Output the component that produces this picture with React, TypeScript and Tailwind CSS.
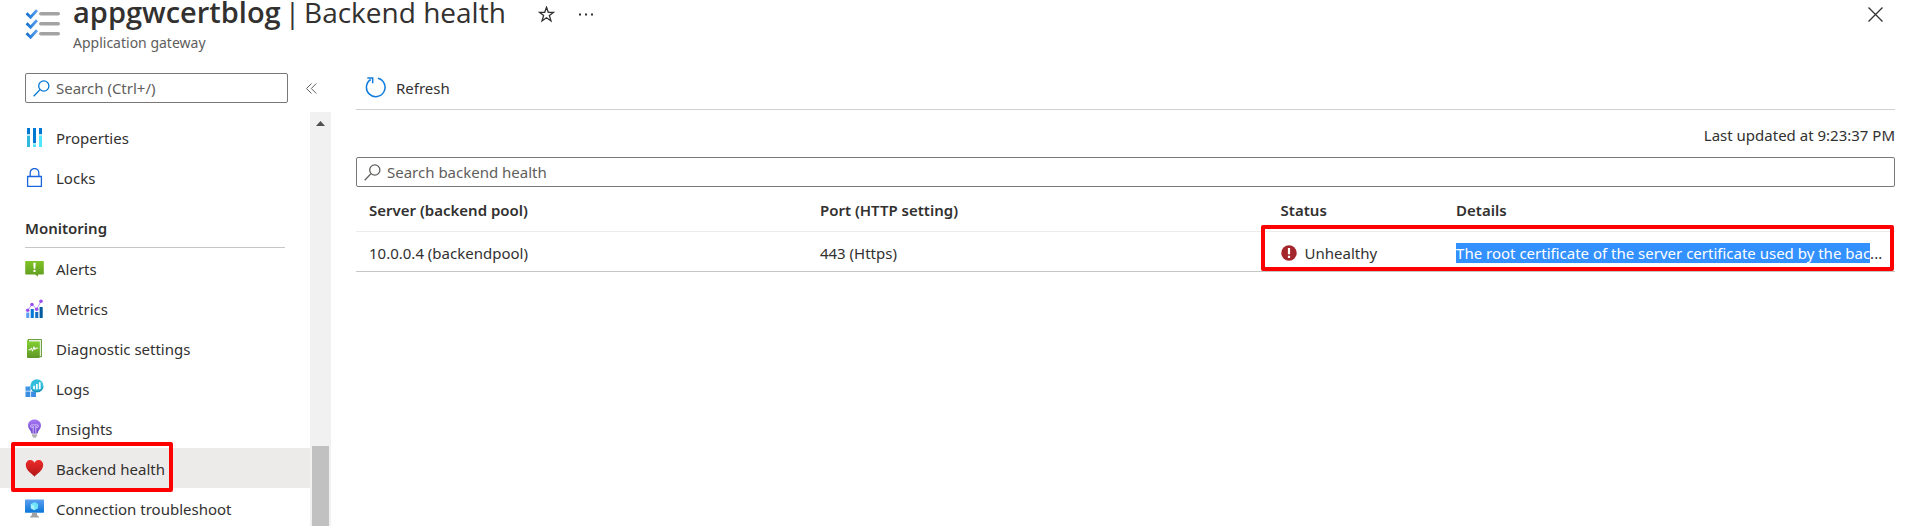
import type { ReactNode } from 'react'

/* ---------- icons ---------- */

function ChecklistIcon() {
  return (
    <svg width="36" height="32" viewBox="0 0 36 32" fill="none" className="shrink-0">
      <defs>
        <linearGradient id="tick" x1="0" y1="0" x2="1" y2="0">
          <stop offset="0" stopColor="#0f6fd0" />
          <stop offset="1" stopColor="#5ea0ef" />
        </linearGradient>
      </defs>
      {[1, 11, 21].map((y) => (
        <g key={y}>
          <path d={`M1.6 ${y + 4.2}l4 4L12 ${y + 1.2}`} stroke="url(#tick)" strokeWidth="2.8" />
          <rect x="14" y={y + 3} width="21" height="3.6" rx="1.8" fill="#a3a3a3" />
        </g>
      ))}
    </svg>
  )
}

function SearchIcon({ className }: { className: string }) {
  return (
    <svg width="17" height="17" viewBox="0 0 17 17" fill="none" stroke="currentColor" strokeWidth="1.3" className={className}>
      <circle cx="10.8" cy="6" r="5.1" />
      <path d="M7 9.6L.7 16.2" />
    </svg>
  )
}

function PropertiesIcon() {
  return (
    <svg width="19" height="19" viewBox="0 0 19 19">
      <path d="M2 0h3v6H2zM8 0h3v15H8zM14 0h3v6h-3z" fill="#0078d4" />
      <path d="M2 6h3v2H2zM8 15h3v1.500H8zM14 6h3v2h-3z" fill="#b5e3f5" />
      <path d="M2 8h3v11H2z" fill="#32b8dc" />
      <path d="M8 16.500h3V19H8zM14 8h3v11h-3z" fill="#50e6ff" />
    </svg>
  )
}

function LockIcon() {
  return (
    <svg width="19" height="19" viewBox="0 0 19 19" fill="none" stroke="#1a66dc" strokeWidth="1.3">
      <path d="M2.600 8.500h13.800v9.800H2.600z" />
      <path d="M5.200 8.300V4.800a4.300 4.300 0 0 1 8.600 0v3.500" />
    </svg>
  )
}

function AlertsIcon() {
  return (
    <svg width="19" height="19" viewBox="0 0 19 19">
      <defs>
        <linearGradient id="alert" x1="0" y1="0" x2="0" y2="1">
          <stop offset="0" stopColor="#7fc425" />
          <stop offset="1" stopColor="#5f9a22" />
        </linearGradient>
      </defs>
      <path d="M.8 2h17.400c.3 0 .6.300.6.600v12.200c0 .300-.3.600-.6.600H13v2.200l-3-2.200H.8a.6.600 0 0 1-.6-.600V2.600c0-.300.3-.600.6-.600z" fill="url(#alert)" />
      <path d="M8.300 3.700h2.400l-.4 6h-1.600z" fill="#fff" />
      <circle cx="9.500" cy="11.900" r="1.200" fill="#fff" />
    </svg>
  )
}

function MetricsIcon() {
  return (
    <svg width="19" height="19" viewBox="0 0 19 19">
      <path d="M1.200 13.500h3.100V19H1.200z" fill="#5ea0ef" />
      <path d="M5.700 10h3.100v9H5.700z" fill="#0078d4" />
      <path d="M10.200 13h3.100v6h-3.100z" fill="#1a6fc0" />
      <path d="M14.600 8h3.100v11h-3.100z" fill="#005ba1" />
      <path d="M2.700 11.200L7 5.500l4.700 4.700L16 2.300" fill="none" stroke="#b796f9" strokeWidth="1" />
      <g fill="#9a4ff0">
        <circle cx="2.700" cy="11.200" r="1.800" />
        <circle cx="7" cy="5.500" r="1.800" />
        <circle cx="11.700" cy="10.200" r="1.800" />
        <circle cx="16" cy="2.300" r="1.800" />
      </g>
    </svg>
  )
}

function DiagnosticIcon() {
  return (
    <svg width="19" height="19" viewBox="0 0 19 19">
      <defs>
        <linearGradient id="book" x1="0" y1="0" x2="0" y2="1">
          <stop offset="0" stopColor="#86d633" />
          <stop offset="1" stopColor="#5e9624" />
        </linearGradient>
      </defs>
      <path d="M3 0h13.200c.5 0 .8.300.8.800v16.600c0 .500-.3.800-.8.800H3z" fill="#6f9f43" />
      <path d="M4 1h12v16H4z" fill="#e6efdc" />
      <path d="M3 .300l-1 1.500V18c0 .500.3.900.8.900H14c.5 0 .8-.300.8-.800V3.200c0-.500-.3-.800-.8-.800H3.400z" fill="url(#book)" />
      <path d="M3.500 10.800h1.700l1.300-1.900.9 3.300 1.600-4.500.8 3 1-1.600h2.400" fill="none" stroke="#fff" strokeWidth="1" />
    </svg>
  )
}

function LogsIcon() {
  return (
    <svg width="19" height="19" viewBox="0 0 19 19">
      <path d="M.5 7.500h5v4.300h-5z" fill="#3f95e8" />
      <path d="M.5 12.600h4.800V18H.5zM6.100 12.600H11V18H6.100z" fill="#3a8de0" />
      <circle cx="11.900" cy="6.800" r="6.500" fill="#32bedd" />
      <path d="M5.600 8.200A6.500 6.500 0 0 0 12 13.300c4 0 6.500-3.100 6.500-6.500 0 0-2 5-7 5-3.600 0-5.900-3.600-5.900-3.600z" fill="#1a8fb5" />
      <path d="M8.200 6.700h1.700v3.500H8.200zM11 5h1.700v5.200H11zM13.900 3.300h1.700v6.900h-1.700z" fill="#fff" />
    </svg>
  )
}

function InsightsIcon() {
  return (
    <svg width="19" height="19" viewBox="0 0 19 19">
      <defs>
        <linearGradient id="bulb" x1="0" y1="0" x2="0" y2="1">
          <stop offset="0" stopColor="#a67af4" />
          <stop offset="1" stopColor="#7145cc" />
        </linearGradient>
      </defs>
      <path d="M9.500.500C5.700.500 3 3 3 6.500c0 2.700 1.800 3.900 2.600 5.600.5 1 .5 2.400 1.200 2.400h5.400c.7 0 .7-1.400 1.200-2.400.8-1.700 2.600-2.900 2.600-5.600 0-3.500-2.700-6-6.500-6z" fill="url(#bulb)" />
      <path d="M8.200 14V7.300M10.800 14V7.300M8.200 7.300a1.300 1.300 0 1 1-1.300-1.400h5.200a1.300 1.300 0 1 1-1.300 1.400" fill="none" stroke="#e3d4ff" strokeWidth=".8" />
      <path d="M7 15.300h5v1.500l-1.300 1.900H8.300L7 16.800z" fill="#b3b3b3" />
    </svg>
  )
}

function HeartIcon() {
  return (
    <svg width="19" height="19" viewBox="0 0 19 19">
      <defs>
        <linearGradient id="heart" x1="0" y1="0" x2="0" y2="1">
          <stop offset="0" stopColor="#ee2a2a" />
          <stop offset="1" stopColor="#b01717" />
        </linearGradient>
      </defs>
      <path d="M9.500 17.700C8.200 15.700.8 11.800.8 6.100.8 3.100 2.800 1 5.400 1c1.900 0 3.400 1.100 4.100 2.800C10.200 2.100 11.700 1 13.600 1c2.600 0 4.600 2.100 4.600 5.100 0 5.700-7.400 9.600-8.700 11.600z" fill="url(#heart)" />
    </svg>
  )
}

function MonitorIcon() {
  return (
    <svg width="19" height="19" viewBox="0 0 19 19">
      <defs>
        <linearGradient id="screen" x1="0" y1="0" x2="0" y2="1">
          <stop offset="0" stopColor="#5ea0ef" />
          <stop offset="1" stopColor="#0a76d8" />
        </linearGradient>
      </defs>
      <rect x="0" y=".500" width="19" height="13.200" rx=".600" fill="url(#screen)" />
      <path d="M9.500 3l3.600 2.100v4.100l-3.600 2.100-3.600-2.100V5.100z" fill="#6fe4f8" />
      <path d="M9.500 7.200v4.100l-3.600-2.100V5.100z" fill="#a9f1fd" />
      <path d="M7.200 13.700h4.600c.2 2.500.7 3.400 2.300 4.100v.600H4.900v-.600c1.600-.700 2.100-1.600 2.300-4.100z" fill="#a0a0a0" />
    </svg>
  )
}

function RefreshIcon() {
  return (
    <svg width="21" height="21" viewBox="0 0 21 21" fill="none" stroke="#0f7bdc" strokeWidth="1.500">
      <path d="M13 1.300a9.300 9.300 0 1 1-7.300 1.200" />
      <path d="M2.300 1h5.400v5.200" />
    </svg>
  )
}

function ErrorIcon() {
  return (
    <svg width="16" height="16" viewBox="0 0 16 16" className="shrink-0">
      <circle cx="8" cy="8" r="7.700" fill="#a4262c" />
      <path d="M6.900 3h2.200v6.200H6.900zM6.900 10.700h2.200v2.200H6.900z" fill="#fff" />
    </svg>
  )
}

/* ---------- sidebar ---------- */

type Item = { label: string; icon: ReactNode; active?: boolean }

const settings: Item[] = [
  { label: 'Properties', icon: <PropertiesIcon /> },
  { label: 'Locks', icon: <LockIcon /> },
]

const monitoring: Item[] = [
  { label: 'Alerts', icon: <AlertsIcon /> },
  { label: 'Metrics', icon: <MetricsIcon /> },
  { label: 'Diagnostic settings', icon: <DiagnosticIcon /> },
  { label: 'Logs', icon: <LogsIcon /> },
  { label: 'Insights', icon: <InsightsIcon /> },
  { label: 'Backend health', icon: <HeartIcon />, active: true },
  { label: 'Connection troubleshoot', icon: <MonitorIcon /> },
]

function NavList({ items }: { items: Item[] }) {
  return (
    <ul>
      {items.map((item) => (
        <li key={item.label} className="relative">
          <a
            href="#"
            aria-current={item.active ? 'page' : undefined}
            className={`flex h-10 items-center gap-3 pl-[25px] ${item.active ? 'bg-[#edebe9]' : ''}`}
          >
            {item.icon}
            <span className="whitespace-nowrap pt-0.5">{item.label}</span>
          </a>
          {item.active && (
            <span className="pointer-events-none absolute -top-1.5 -bottom-1 left-[11px] w-[162px] rounded-xs border-4 border-[#ff0000]" />
          )}
        </li>
      ))}
    </ul>
  )
}

function Sidebar() {
  return (
    <aside className="flex w-[331px] shrink-0 flex-col">
      <div className="flex shrink-0 items-center pb-[9px] pl-[25px]">
        <label className="flex h-[30px] w-[263px] items-center gap-1.5 rounded-xs border border-[#7a7877] pl-[7px]">
          <SearchIcon className="shrink-0 text-[#0078d4]" />
          <input
            type="text"
            aria-label="Search menu"
            placeholder="Search (Ctrl+/)"
            className="min-w-0 flex-1 bg-transparent outline-none placeholder:text-[#605e5c]"
          />
        </label>
        <button type="button" aria-label="Collapse menu" className="ml-[18px]">
          <svg width="11" height="11" viewBox="0 0 11 11" fill="none" stroke="#605e5c" strokeWidth="1">
            <path d="M5.500.500l-5 5 5 5M10.300.500l-5 5 5 5" />
          </svg>
        </button>
      </div>
      <div className="flex min-h-0 flex-1">
        <nav className="flex-1 overflow-hidden pt-[5px]">
          <NavList items={settings} />
          <h2 className="mr-[25px] ml-[25px] flex h-[51px] items-center border-b border-[#c8c6c4] pt-3 font-semibold">
            Monitoring
          </h2>
          <NavList items={monitoring} />
        </nav>
        <div className="flex w-[21px] flex-col items-center bg-[#f1f1f1]">
          <svg width="9" height="5" viewBox="0 0 9 5" className="mt-[9px] shrink-0">
            <path d="M4.500 0L9 5H0z" fill="#505050" />
          </svg>
          <div className="mt-auto h-20 w-[17px] bg-[#c1c1c1]" />
        </div>
      </div>
    </aside>
  )
}

/* ---------- main ---------- */

function HealthTable() {
  return (
    <table className="w-full table-fixed text-left">
      <colgroup>
        <col className="w-[29.3%]" />
        <col className="w-[30%]" />
        <col className="w-[11.4%]" />
        <col />
      </colgroup>
      <thead>
        <tr className="h-11 border-b border-[#edebe9]">
          <th className="pt-0.5 pl-[13px] font-semibold">Server (backend pool)</th>
          <th className="pt-0.5 pl-[13px] font-semibold">Port (HTTP setting)</th>
          <th className="pt-0.5 pl-3 font-semibold">Status</th>
          <th className="pt-0.5 pl-3 font-semibold">Details</th>
        </tr>
      </thead>
      <tbody>
        <tr className="relative h-10 border-b border-[#c8c6c4]">
          <td className="pt-[3px] pl-[13px]">10.0.0.4 (backendpool)</td>
          <td className="pt-[3px] pl-[13px]">443 (Https)</td>
          <td className="pt-[3px] pl-3">
            <div className="flex items-center gap-2">
              <ErrorIcon />
              Unhealthy
            </div>
          </td>
          <td className="pt-[3px] pl-3 whitespace-nowrap">
            <span className="bg-[#3390ff] text-white">The root certificate of the server certificate used by the bac</span>...
            <span className="pointer-events-none absolute -top-1.5 right-px -bottom-px left-[58.8%] rounded-xs border-4 border-[#ff0000]" />
          </td>
        </tr>
      </tbody>
    </table>
  )
}

export default function App() {
  return (
    <div className="flex h-screen flex-col overflow-hidden bg-white font-['Noto_Sans','Open_Sans',sans-serif] text-[15px] leading-5 text-[#323130]">
      <header className="flex h-[73px] shrink-0 items-start pr-[29px] pl-[25px]">
        <div className="pt-2">
          <ChecklistIcon />
        </div>
        <div className="ml-3">
          <h1 className="-mt-2 flex items-baseline gap-1 font-['Open_Sans','Noto_Sans',sans-serif] text-[28px] leading-10 whitespace-nowrap">
            <span className="text-[29px] font-semibold">appgwcertblog</span>
            <span>|</span>
            <span>Backend health</span>
          </h1>
          <p className="pt-px text-sm text-[#605e5c]">Application gateway</p>
        </div>
        <button type="button" aria-label="Add to favorites" className="mt-1.5 ml-8">
          <svg width="17" height="17" viewBox="0 0 17 17" fill="none" stroke="#323130" strokeWidth="1.300">
            <path d="M8.500 1.300l1.800 5h5.300l-4.200 3.300 1.600 5.400-4.500-3.200L4 15l1.600-5.400L1.400 6.300h5.300z" />
          </svg>
        </button>
        <button type="button" aria-label="More" className="mt-[13px] ml-6">
          <svg width="14" height="3" viewBox="0 0 14 3" fill="#323130">
            <path d="M0 .500h2v2H0zM6 .500h2v2H6zM12 .500h2v2h-2z" />
          </svg>
        </button>
        <button type="button" aria-label="Close" className="mt-[7px] ml-auto">
          <svg width="15" height="15" viewBox="0 0 15 15" stroke="#323130" strokeWidth="1.300">
            <path d="M.500.500l14 14M14.500.500l-14 14" />
          </svg>
        </button>
      </header>

      <div className="flex min-h-0 flex-1">
        <Sidebar />
        <main className="min-w-0 flex-1 pr-[17px] pl-[25px]">
          <div className="flex h-[37px] items-start border-b border-[#d2d0ce] pl-[9px]">
            <button type="button" className="flex items-center gap-2.5 pt-1">
              <RefreshIcon />
              Refresh
            </button>
          </div>
          <p className="pt-[15px] pb-3 text-right">Last updated at 9:23:37 PM</p>
          <label className="flex h-[30px] items-center gap-1.5 rounded-xs border border-[#7a7877] pl-[7px]">
            <SearchIcon className="shrink-0 text-[#605e5c]" />
            <input
              type="text"
              aria-label="Search backend health"
              placeholder="Search backend health"
              className="min-w-0 flex-1 bg-transparent outline-none placeholder:text-[#605e5c]"
            />
          </label>
          <HealthTable />
        </main>
      </div>
    </div>
  )
}
